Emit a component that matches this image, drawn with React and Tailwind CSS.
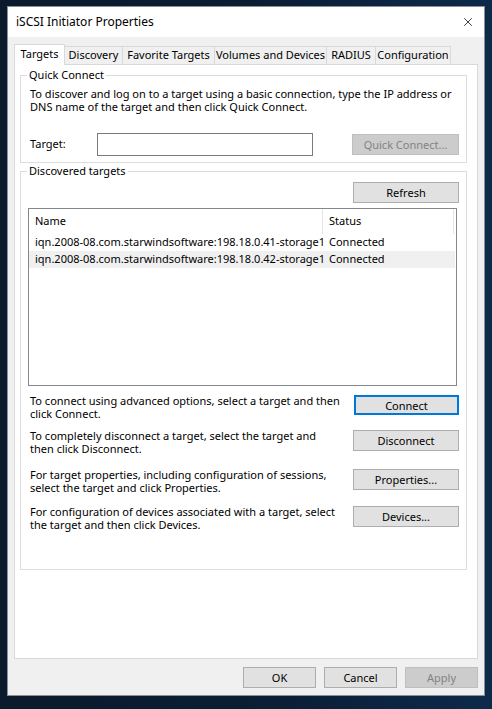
import { X } from 'lucide-react'

const font = { fontFamily: '"Noto Sans", "Segoe UI", Tahoma, sans-serif' }

const btn =
  'h-[21px] border border-[#adadad] bg-[#e1e1e1] text-[11px] leading-none text-black flex items-center justify-center'
const btnOff =
  'h-[21px] border border-[#bfbfbf] bg-[#cccccc] text-[11px] leading-none text-[#838383] flex items-center justify-center'

const tabs = ['Targets', 'Discovery', 'Favorite Targets', 'Volumes and Devices', 'RADIUS', 'Configuration']
const tabWidths = ['w-[51px]', 'w-[58px]', 'w-[92px]', 'w-[112px]', 'w-[49px]', 'w-[75px]']

const targets = [
  { name: 'iqn.2008-08.com.starwindsoftware:198.18.0.41-storage1', status: 'Connected' },
  { name: 'iqn.2008-08.com.starwindsoftware:198.18.0.42-storage1', status: 'Connected' },
]

const actions = [
  { lines: ['To connect using advanced options, select a target and then', 'click Connect.'], label: 'Connect', focus: true, mt: 'mt-[8px]' },
  { lines: ['To completely disconnect a target, select the target and', 'then click Disconnect.'], label: 'Disconnect', mt: 'mt-[9px]' },
  { lines: ['For target properties, including configuration of sessions,', 'select the target and click Properties.'], label: 'Properties...', mt: 'mt-[13px]' },
  { lines: ['For configuration of devices associated with a target, select', 'the target and then click Devices.'], label: 'Devices...', mt: 'mt-[11px]' },
]

function GroupBox({ title, className, children }) {
  return (
    <div className={'relative border border-[#dcdcdc] ' + className}>
      <span className="absolute left-[6px] top-[-8px] bg-white px-[2px] text-[11px] leading-[14px]">{title}</span>
      {children}
    </div>
  )
}

export default function App() {
  return (
    <div
      style={font}
      className="w-[492px] h-[709px] bg-gradient-to-r from-[#0b1a2c] via-[#0a1d33] to-[#0d2a4a] pt-[6px] pl-[7px] overflow-hidden"
    >
      <div className="w-[478px] h-[690px] bg-[#f0f0f0] border border-[#8a8f96] flex flex-col">
        {/* title bar */}
        <div className="h-[30px] bg-white flex items-center pl-[8px] pr-[9px] shrink-0">
          <span className="text-[12px] text-black flex-1">iSCSI Initiator Properties</span>
          <X size={14} strokeWidth={1.3} className="text-black" />
        </div>

        <div className="pl-[6px] pt-[7px] flex flex-col text-[11px]">
          {/* tabs */}
          <div className="flex items-end h-[20px] relative z-10">
            {tabs.map((t, i) =>
              i === 0 ? (
                <div
                  key={t}
                  className={tabWidths[i] + ' h-[21px] mb-[-1px] pb-[1px] bg-white border border-b-0 border-[#d9d9d9] flex items-center justify-center whitespace-nowrap'}
                >
                  {t}
                </div>
              ) : (
                <div
                  key={t}
                  className={tabWidths[i] + ' h-[18px] border border-b-0 border-l-0 border-[#d9d9d9] bg-[#f0f0f0] flex items-center justify-center whitespace-nowrap'}
                >
                  {t}
                </div>
              )
            )}
          </div>

          {/* panel */}
          <div className="w-[464px] h-[595px] bg-white border border-[#d9d9d9] pl-[5px] pr-[10px] pt-[10px] text-black">
            <GroupBox title="Quick Connect" className="h-[88px] pl-[9px] pr-[7px] pt-[11px]">
              <p className="leading-[13px] whitespace-nowrap">
                To discover and log on to a target using a basic connection, type the IP address or
                <br />
                DNS name of the target and then click Quick Connect.
              </p>
              <div className="flex items-center mt-[20px]">
                <span className="w-[67px]">Target:</span>
                <div className="w-[216px] h-[23px] border border-[#7a7a7a] bg-white" />
                <div className="flex-1" />
                <div className={btnOff + ' w-[107px]'}>Quick Connect...</div>
              </div>
            </GroupBox>

            <GroupBox title="Discovered targets" className="mt-[8px] h-[399px] pl-[7px] pr-[7px] pt-[10px]">
              <div className="flex justify-end">
                <div className={btn + ' w-[106px]'}>Refresh</div>
              </div>
              <div className="mt-[5px] mr-[2px] h-[178px] border border-[#828790] bg-white">
                <div className="flex h-[25px] items-center">
                  <div className="w-[294px] h-full pl-[6px] flex items-center border-r border-[#e5e5e5]">Name</div>
                  <div className="w-[131px] h-full pl-[6px] flex items-center border-r border-[#e5e5e5]">Status</div>
                </div>
                {targets.map((r, i) => (
                  <div key={r.name} className={'flex h-[17px] items-center mr-[1px] ' + (i === 1 ? 'bg-[#f0f0f0]' : '')}>
                    <div className="w-[294px] pl-[6px] whitespace-nowrap">{r.name}</div>
                    <div className="pl-[6px]">{r.status}</div>
                  </div>
                ))}
              </div>

              {actions.map(a => (
                <div key={a.label} className={'flex items-start ' + a.mt}>
                  <p className="leading-[13px] flex-1 pl-[2px] whitespace-nowrap">
                    {a.lines[0]}
                    <br />
                    {a.lines[1]}
                  </p>
                  <div
                    className={
                      a.focus
                        ? 'mt-[1px] h-[20px] w-[105px] border-2 border-[#0078d7] bg-[#e1e1e1] flex items-center justify-center leading-none'
                        : 'mt-[1px] h-[21px] w-[106px] border border-[#adadad] bg-[#e1e1e1] flex items-center justify-center leading-none'
                    }
                  >
                    {a.label}
                  </div>
                </div>
              ))}
            </GroupBox>
          </div>

          {/* dialog buttons */}
          <div className="flex justify-end gap-[8px] pr-[6px] mt-[8px]">
            <div className={btn + ' w-[73px]'}>OK</div>
            <div className={btn + ' w-[73px]'}>Cancel</div>
            <div className={btnOff + ' w-[73px]'}>Apply</div>
          </div>
        </div>
      </div>
    </div>
  )
}
